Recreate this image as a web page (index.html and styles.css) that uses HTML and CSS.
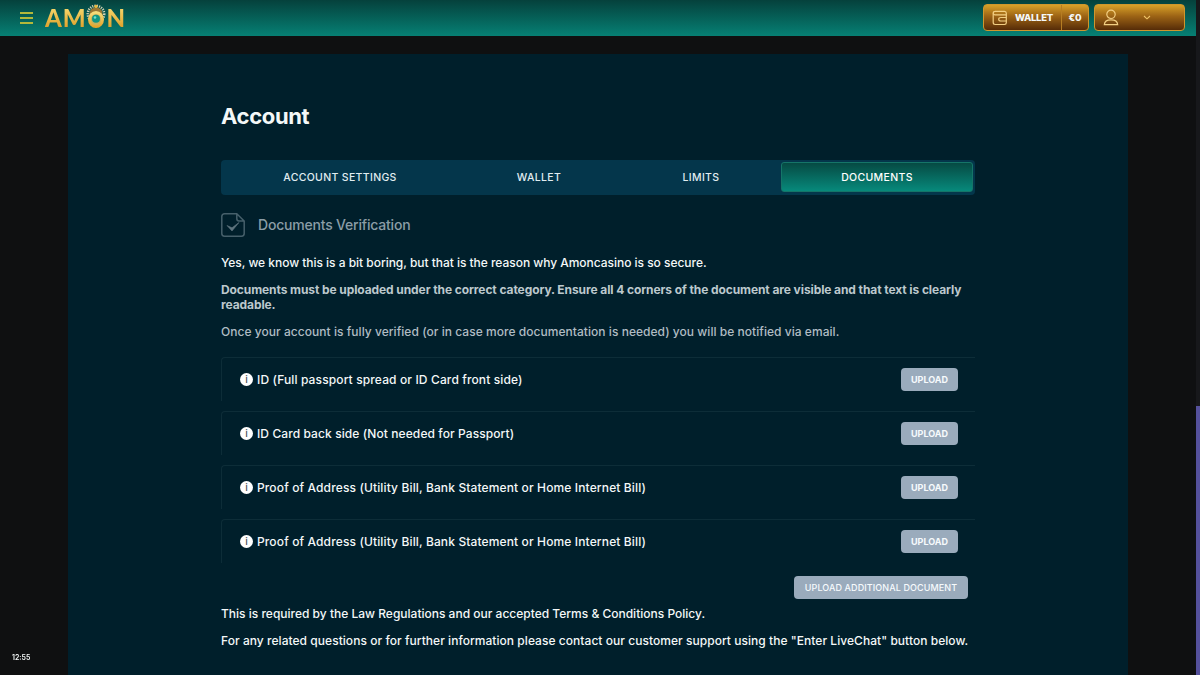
FILE: index.html
```html
<!DOCTYPE html>
<html lang="en">
<head>
    <meta charset="utf-8">
    <title>Amon - Account</title>
    <meta name="viewport" content="width=device-width, initial-scale=1.0">
    <link rel="stylesheet" href="styles.css">
</head>
<body>
    <div class="header">
        <button class="menu"><span></span><span></span><span></span></button>
        <div class="logo">
            <span>AM</span>
            <svg class="gem" width="22" height="25" viewBox="0 0 22 25">
                <defs>
                    <linearGradient id="gold" x1="0" y1="0" x2="0" y2="1">
                        <stop offset="0" stop-color="#f6dc7a"/>
                        <stop offset="1" stop-color="#e3a52c"/>
                    </linearGradient>
                </defs>
                <circle cx="11" cy="10" r="8.2" fill="none" stroke="#d5d3b4" stroke-width="2.6" stroke-dasharray="1.2 1.1"/>
                <circle cx="11" cy="10" r="6.6" fill="#9a7632"/>
                <ellipse cx="11" cy="15.5" rx="6.5" ry="7" fill="#c9b25a" stroke="url(#gold)" stroke-width="3"/>
                <circle cx="11" cy="14.8" r="4" fill="#119583"/>
                <circle cx="10" cy="13.5" r="1.3" fill="#6fe0cb"/>
                <circle cx="11" cy="2.4" r="1.7" fill="#e8b93e"/>
            </svg>
            <span>N</span>
        </div>
        <div class="header_right">
            <div class="gold_btn wallet">
                <svg width="16" height="16" viewBox="0 0 16 16" fill="none" stroke="#f3cf83" stroke-width="1.2">
                    <path d="M14.3 5V3.2C14.3 2 13.5 1.300 12.5 1.300H3.2C2 1.300 1.200 2 1.200 3.200V12.600C1.200 13.700 2 14.500 3.200 14.500H12.500C13.500 14.500 14.300 13.800 14.300 12.800V4.800"/>
                    <path d="M1.200 3.500C1.500 4.500 2.200 4.900 3 4.900H14.300"/>
                    <path d="M14.300 7.500H9C7.600 7.500 6.700 8.200 6.700 9.200S7.600 11 9 11H14.300"/>
                </svg>
                <span class="wallet_label">WALLET</span>
                <span class="balance">€0</span>
            </div>
            <div class="gold_btn user">
                <svg width="16" height="17" viewBox="0 0 16 17" fill="none" stroke="#f3cf83" stroke-width="1.2">
                    <circle cx="8" cy="5.3" r="4.2"/>
                    <path d="M1.300 15.700C1.500 12.500 4 10.800 8 10.800S14.500 12.500 14.700 15.700Z"/>
                </svg>
                <svg class="arrow" width="8" height="5" viewBox="0 0 8 5" fill="none" stroke="#f0c468" stroke-width="1.1">
                    <path d="M1 1L4 3.800L7 1"/>
                </svg>
            </div>
        </div>
    </div>

    <div class="main">
        <div class="account">
            <h1>Account</h1>
            <div class="tabs">
                <button class="tab_head t1">ACCOUNT SETTINGS</button>
                <button class="tab_head t2">WALLET</button>
                <button class="tab_head t3">LIMITS</button>
                <button class="tab_head active">DOCUMENTS</button>
            </div>

            <div class="doc_title">
                <svg width="24" height="24" viewBox="0 0 24 24" fill="none" stroke="#46606b" stroke-width="1.5">
                    <path d="M15.500 .8H3.500C2 .8 .8 2 .8 3.500V20.500C.8 22 2 23.200 3.500 23.200H20.500C22 23.200 23.200 22 23.200 20.500V8L15.800 .8V5.500C15.800 7 16.500 8 18 8H23.200"/>
                    <path d="M6 12.500L11 18L18 9.500L11 14.800Z" fill="#60757f" stroke="#60757f" stroke-width=".6"/>
                </svg>
                <h2>Documents Verification</h2>
            </div>

            <p class="intro">Yes, we know this is a bit boring, but that is the reason why Amoncasino is so secure.</p>
            <p class="rules">Documents must be uploaded under the correct category. Ensure all 4 corners of the document are visible and that text is clearly<br>readable.</p>
            <p class="notice">Once your account is fully verified (or in case more documentation is needed) you will be notified via email.</p>

            <div class="docs">
                <div class="doc">
                    <span class="info">i</span>
                    <span class="doc_name">ID (Full passport spread or ID Card front side)</span>
                    <button class="upload">UPLOAD</button>
                </div>
                <div class="doc">
                    <span class="info">i</span>
                    <span class="doc_name back">ID Card back side (Not needed for Passport)</span>
                    <button class="upload">UPLOAD</button>
                </div>
                <div class="doc">
                    <span class="info">i</span>
                    <span class="doc_name">Proof of Address (Utility Bill, Bank Statement or Home Internet Bill)</span>
                    <button class="upload">UPLOAD</button>
                </div>
                <div class="doc">
                    <span class="info">i</span>
                    <span class="doc_name">Proof of Address (Utility Bill, Bank Statement or Home Internet Bill)</span>
                    <button class="upload">UPLOAD</button>
                </div>
            </div>
            <button class="upload more">UPLOAD ADDITIONAL DOCUMENT</button>

            <p class="law">This is required by the Law Regulations and our accepted Terms &amp; Conditions Policy.</p>
            <p class="support">For any related questions or for further information please contact our customer support using the "Enter LiveChat" button below.</p>
        </div>
    </div>

    <div class="clock">12:55</div>
    <div class="scrollbar"><div class="thumb"></div></div>
</body>
</html>
```
FILE: styles.css
```css
* {
    box-sizing: border-box;
}
body {
    margin: 0;
    height: 675px;
    overflow: hidden;
    background-color: #0f1011;
    color: #f4f8f8;
    font-family: Inter, "Open Sans", sans-serif;
    font-size: 12px;
    font-weight: 500;
}
button {
    border: none;
    padding: 0;
    font-family: inherit;
}
.header {
    width: 1196px;
    height: 36px;
    padding: 0 11px 0 20px;
    display: flex;
    align-items: center;
    background: linear-gradient(#05413c, #068074);
}
.menu {
    width: 13px;
    height: 12px;
    display: flex;
    flex-direction: column;
    justify-content: space-between;
    background: none;
}
.menu span {
    width: 13px;
    height: 2px;
    background-color: #b3b83a;
}
.logo {
    display: flex;
    align-items: flex-end;
    margin-left: 12px;
    height: 25px;
    margin-top: -4px;
    font-family: Lato, sans-serif;
    font-weight: 900;
    font-size: 24px;
    line-height: 23px;
}
.logo span {
    color: transparent;
    background: linear-gradient(#f8dc72, #dd9d26);
    -webkit-background-clip: text;
    background-clip: text;
    letter-spacing: 0.9px;
}
.gem {
    margin: 0 -1px;
}
.header_right {
    display: flex;
    gap: 5px;
    margin-left: auto;
    margin-top: -1px;
}
.gold_btn {
    height: 27px;
    display: flex;
    align-items: center;
    border: 1px solid #cf962c;
    border-radius: 4px;
    background: linear-gradient(#d7a128, #9c6315 45%, #562c08);
}
.wallet {
    width: 106px;
    padding-left: 8px;
    font-size: 9.5px;
    font-weight: 800;
}
.wallet_label {
    width: 46px;
    margin-left: 7px;
    letter-spacing: -0.3px;
}
.balance {
    flex: 1;
    height: 25px;
    line-height: 25px;
    text-align: center;
    border-left: 1px solid #b67d23;
}
.user {
    width: 91px;
    padding-left: 8px;
}
.arrow {
    margin-left: 24px;
}
.main {
    width: 1060px;
    height: 640px;
    margin: 18px 0 0 68px;
    padding: 48px 153px 0;
    background-color: #001f2b;
}
.account {
    width: 754px;
}
h1 {
    margin: 0;
    font-size: 22px;
    line-height: 28px;
    font-weight: 700;
    letter-spacing: -0.35px;
}
.tabs {
    display: flex;
    height: 35px;
    margin-top: 30px;
    padding: 2px;
    background-color: #04364b;
    border-radius: 4px;
}
.tab_head {
    color: #e1edf1;
    background: none;
    padding-bottom: 1px;
    font-size: 10.5px;
    font-weight: 500;
    letter-spacing: 0.33px;
}
.t1 {
    width: 234px;
}
.t2 {
    width: 164px;
}
.t3 {
    width: 160px;
}
.tab_head.active {
    flex: 1;
    height: 30px;
    padding: 1px 0 0;
    border: 1px solid #157568;
    border-radius: 3px;
    background: linear-gradient(#064a43, #07897b);
    color: #fff;
}
.doc_title {
    display: flex;
    align-items: center;
    gap: 13px;
    height: 24px;
    margin-top: 18px;
}
h2 {
    margin: 0 0 2px;
    color: #8b9da6;
    font-size: 14px;
    font-weight: 500;
    letter-spacing: -0.2px;
}
p {
    margin: 0 0 12px;
    line-height: 15px;
    white-space: nowrap;
}
.intro {
    margin-top: 18px;
    letter-spacing: -0.03px;
}
.rules {
    color: #bcc8cd;
    font-weight: 700;
    letter-spacing: -0.09px;
}
.notice {
    color: #b0bcc3;
    letter-spacing: 0.04px;
}
.docs {
    margin-top: 18px;
}
.doc {
    display: flex;
    align-items: center;
    height: 44px;
    margin-bottom: 10px;
    padding: 0 17px 1px 18px;
    border-top: 1px solid #0d2d38;
    border-left: 1px solid #0d2d38;
    border-top-left-radius: 4px;
}
.info {
    width: 13px;
    height: 13px;
    margin-right: 4px;
    border-radius: 50%;
    background-color: #fff;
    color: #4a565b;
    font-size: 10px;
    line-height: 13px;
    text-align: center;
}
.doc_name {
    white-space: nowrap;
    letter-spacing: 0.13px;
}
.doc_name.back {
    letter-spacing: 0.09px;
}
.upload {
    width: 57px;
    height: 23px;
    margin-left: auto;
    border-radius: 4px;
    background-color: #9aabbc;
    color: #f6fafc;
    font-size: 9px;
    font-weight: 700;
}
.more {
    display: block;
    width: 174px;
    margin: 13px 7px 0 auto;
    font-weight: 500;
    letter-spacing: 0.1px;
}
.law {
    margin-top: 7px;
}
.support {
    letter-spacing: 0.045px;
}
.clock {
    position: fixed;
    left: 12px;
    bottom: 12px;
    font-size: 7px;
    line-height: 11px;
    font-weight: 600;
}
.scrollbar {
    position: fixed;
    top: 0;
    right: 0;
    width: 4px;
    height: 675px;
    background-color: #17181b;
}
.thumb {
    height: 269px;
    margin-top: 406px;
    background-color: #55519c;
}
```
